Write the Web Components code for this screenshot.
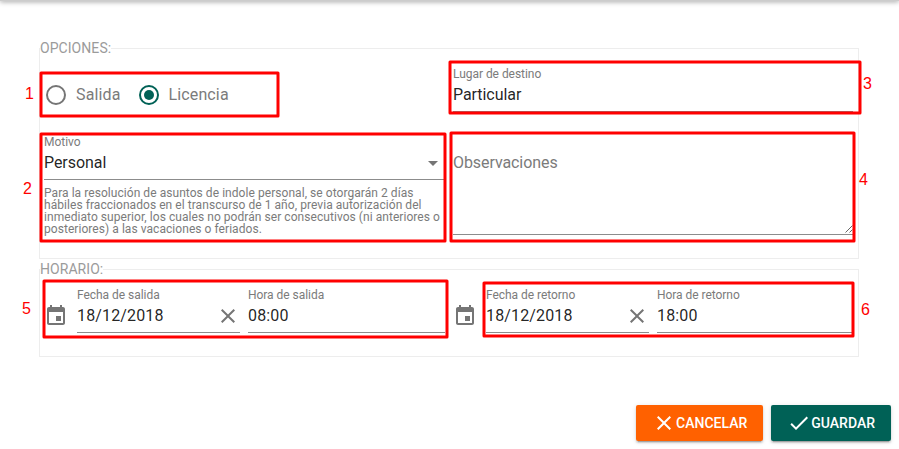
<!DOCTYPE html>
<html lang="es">
<head>
<meta charset="utf-8">
<title>Solicitud</title>
<style>
html,body{margin:0;height:100%;overflow:hidden;background:#fff}
body{font-family:Roboto,"Liberation Sans",sans-serif;color:rgba(0,0,0,.87)}
</style>
</head>
<body>
<request-form></request-form>
<script>
const define = (name, html) => {
  const t = document.createElement('template');
  t.innerHTML = html;
  customElements.define(name, class extends HTMLElement {
    constructor() {
      super();
      this.attachShadow({mode: 'open'}).append(t.content.cloneNode(true));
    }
  });
};

const paths = {
  event: 'M17 12h-5v5h5v-5zM16 1v2H8V1H6v2H5c-1.110 0-1.990.9-1.990 2L3 19c0 1.100.89 2 2 2h14c1.100 0 2-.9 2-2V5c0-1.100-.9-2-2-2h-1V1h-2zm3 18H5V8h14v11z',
  close: 'M19 6.410L17.590 5 12 10.590 6.410 5 5 6.410 10.590 12 5 17.590 6.410 19 12 13.410 17.590 19 19 17.590 13.410 12z',
  check: 'M9 16.170L4.830 12l-1.420 1.410L9 19 21 7l-1.410-1.410z',
  drop: 'M7 10l5 5 5-5z'
};
customElements.define('md-icon', class extends HTMLElement {
  connectedCallback() {
    if (this.shadowRoot) return;
    this.attachShadow({mode: 'open'}).innerHTML =
      `<style>:host{display:block;flex:none;width:24px;height:24px}svg{display:block;width:100%;height:100%;fill:currentColor}</style>
       <svg viewBox="0 0 24 24"><path d="${paths[this.getAttribute('name')]}"/></svg>`;
  }
});

define('field-group', `<style>
:host{display:block;box-sizing:border-box;border:1px solid #ededed}
.legend{display:block;width:max-content;height:16px;margin-top:-9px;background:#fff;
  font-size:14px;line-height:16px;letter-spacing:.06px;color:#9b9b9b}
</style><span class="legend"><slot name="legend"></slot></span><slot></slot>`);

define('radio-option', `<style>
:host{display:flex;align-items:center;gap:10px;font-size:16px;line-height:20px;letter-spacing:.13px;color:#7b7b7b}
.ring{box-sizing:border-box;width:20px;height:20px;border:2px solid #757575;border-radius:50%;display:grid;place-items:center}
:host([checked]) .ring{border-color:#006156}
:host([checked]) .ring::after{content:"";width:10px;height:10px;border-radius:50%;background:#006156}
</style><span class="ring"></span><span><slot></slot></span>`);

define('text-field', `<style>
:host{display:block;min-width:0}
.label{height:14px;font-size:12px;line-height:14px;letter-spacing:-.04px;color:#7b7b7b;white-space:nowrap}
.row{box-sizing:border-box;height:31px;display:flex;justify-content:space-between;padding-top:4px;border-bottom:1px solid #8c8c8c}
.value{font-size:16px;line-height:20px;letter-spacing:var(--spacing,-.06px);white-space:nowrap}
</style><div class="label"><slot name="label"></slot></div>
<div class="row"><span class="value"><slot></slot></span><slot name="action"></slot></div>`);

define('note-area', `<style>
:host{display:block;box-sizing:border-box;position:relative;height:82px;border-bottom:1px solid #8c8c8c;font-size:16px;line-height:20px;letter-spacing:-.08px;color:#7b7b7b}
svg{position:absolute;right:0;bottom:1px;width:8px;height:8px}
</style><slot></slot><svg viewBox="0 0 8 8" fill="none" stroke="#555" stroke-width=".9"><path d="M.5 7.500L7.500.5M4.500 7.500L7.500 4.500"/></svg>`);

define('raised-button', `<style>
:host{display:flex;align-items:center;box-sizing:border-box;height:36px;padding:0 16px;border-radius:2px;color:#fff;background:var(--fill);
 font-size:14px;font-weight:500;line-height:36px;box-shadow:0 3px 1px -2px rgba(0,0,0,.2),0 2px 2px rgba(0,0,0,.14),0 1px 5px rgba(0,0,0,.12)}
</style><slot name="icon"></slot><span><slot></slot></span>`);

customElements.define('callout-layer', class extends HTMLElement {
  connectedCallback() {
    const boxes = [[41,73,278,116],[41,134,445,241],[450,62,860,113],[451,133,854,241],[44,281,447,337],[484,283,853,336]];
    const marks = [[25,99],[23,194],[863,89],[859,185],[22,314],[861,315]];
    this.attachShadow({mode: 'open'}).innerHTML =
      `<style>:host{position:absolute;inset:0;pointer-events:none}svg{display:block}
       rect{fill:none;stroke:red;stroke-width:3;stroke-linejoin:round}
       text{fill:red;font:16px "Liberation Sans",sans-serif}</style>
       <svg width="899" height="449">` +
      boxes.map(([a,b,c,d]) => `<rect x="${a}" y="${b}" width="${c-a}" height="${d-b}"/>`).join('') +
      marks.map(([x,y], i) => `<text x="${x}" y="${y}">${i+1}</text>`).join('') + '</svg>';
  }
});

define('request-form', `<style>
:host{display:flex;flex-direction:column;position:relative;box-sizing:border-box;width:899px;height:449px;padding:48px 8px 8px 39px;background:#fff}
.shade{position:absolute;left:0;right:0;top:-4px;height:5px;background:#ccc;box-shadow:0 1px 5px rgba(0,0,0,.35)}
field-group{width:820px}
.options{height:211px}
.schedule{height:88px;margin-top:10px}
.cols{display:grid;grid-template-columns:401px 400px;column-gap:8px;padding-left:4px}
.first{padding-top:11px}
.radios{display:flex;gap:18px;height:20px;padding:18px 0 0 2px}
.second{margin-top:23px}
.hint{margin:7px 0 0;font-size:12px;line-height:12px;color:#7b7b7b;letter-spacing:.055px;white-space:nowrap}
note-area{margin-top:18px}
.schedule .cols{padding-top:11px}
.when{display:grid;grid-template-columns:24px 163px 1fr;column-gap:9px}
.when>:last-child{margin-left:-1px}
.when>md-icon{margin-top:16px}
.when text-field{--spacing:.14px}
.when md-icon,.second md-icon{color:#757575}
md-icon[slot=action]{margin-top:-2px}
.actions{display:flex;justify-content:flex-end;gap:8px;margin-top:auto}
</style>
<div class="shade"></div>
<field-group class="options"><span slot="legend">OPCIONES:</span>
 <div class="cols first">
  <div class="radios"><radio-option>Salida</radio-option><radio-option checked>Licencia</radio-option></div>
  <text-field><span slot="label">Lugar de destino</span>Particular</text-field>
 </div>
 <div class="cols second">
  <div>
   <text-field><span slot="label">Motivo</span>Personal<md-icon slot="action" name="drop"></md-icon></text-field>
   <p class="hint">Para la resolución de asuntos de indole personal, se otorgarán 2 días<br>hábiles fraccionados en el transcurso de 1 año, previa autorización del<br>inmediato superior, los cuales no podrán ser consecutivos (ni anteriores o<br>posteriores) a las vacaciones o feriados.</p>
  </div>
  <note-area>Observaciones</note-area>
 </div>
</field-group>
<field-group class="schedule"><span slot="legend">HORARIO:</span>
 <div class="cols">
  <div class="when"><md-icon name="event"></md-icon>
   <text-field><span slot="label">Fecha de salida</span>18/12/2018<md-icon slot="action" name="close"></md-icon></text-field>
   <text-field><span slot="label">Hora de salida</span>08:00</text-field></div>
  <div class="when"><md-icon name="event"></md-icon>
   <text-field><span slot="label">Fecha de retorno</span>18/12/2018<md-icon slot="action" name="close"></md-icon></text-field>
   <text-field><span slot="label">Hora de retorno</span>18:00</text-field></div>
 </div>
</field-group>
<div class="actions">
 <raised-button style="--fill:#ff6100"><md-icon slot="icon" name="close"></md-icon>CANCELAR</raised-button>
 <raised-button style="--fill:#006156"><md-icon slot="icon" name="check"></md-icon>GUARDAR</raised-button>
</div>
<callout-layer></callout-layer>`);
</script>
</body>
</html>
